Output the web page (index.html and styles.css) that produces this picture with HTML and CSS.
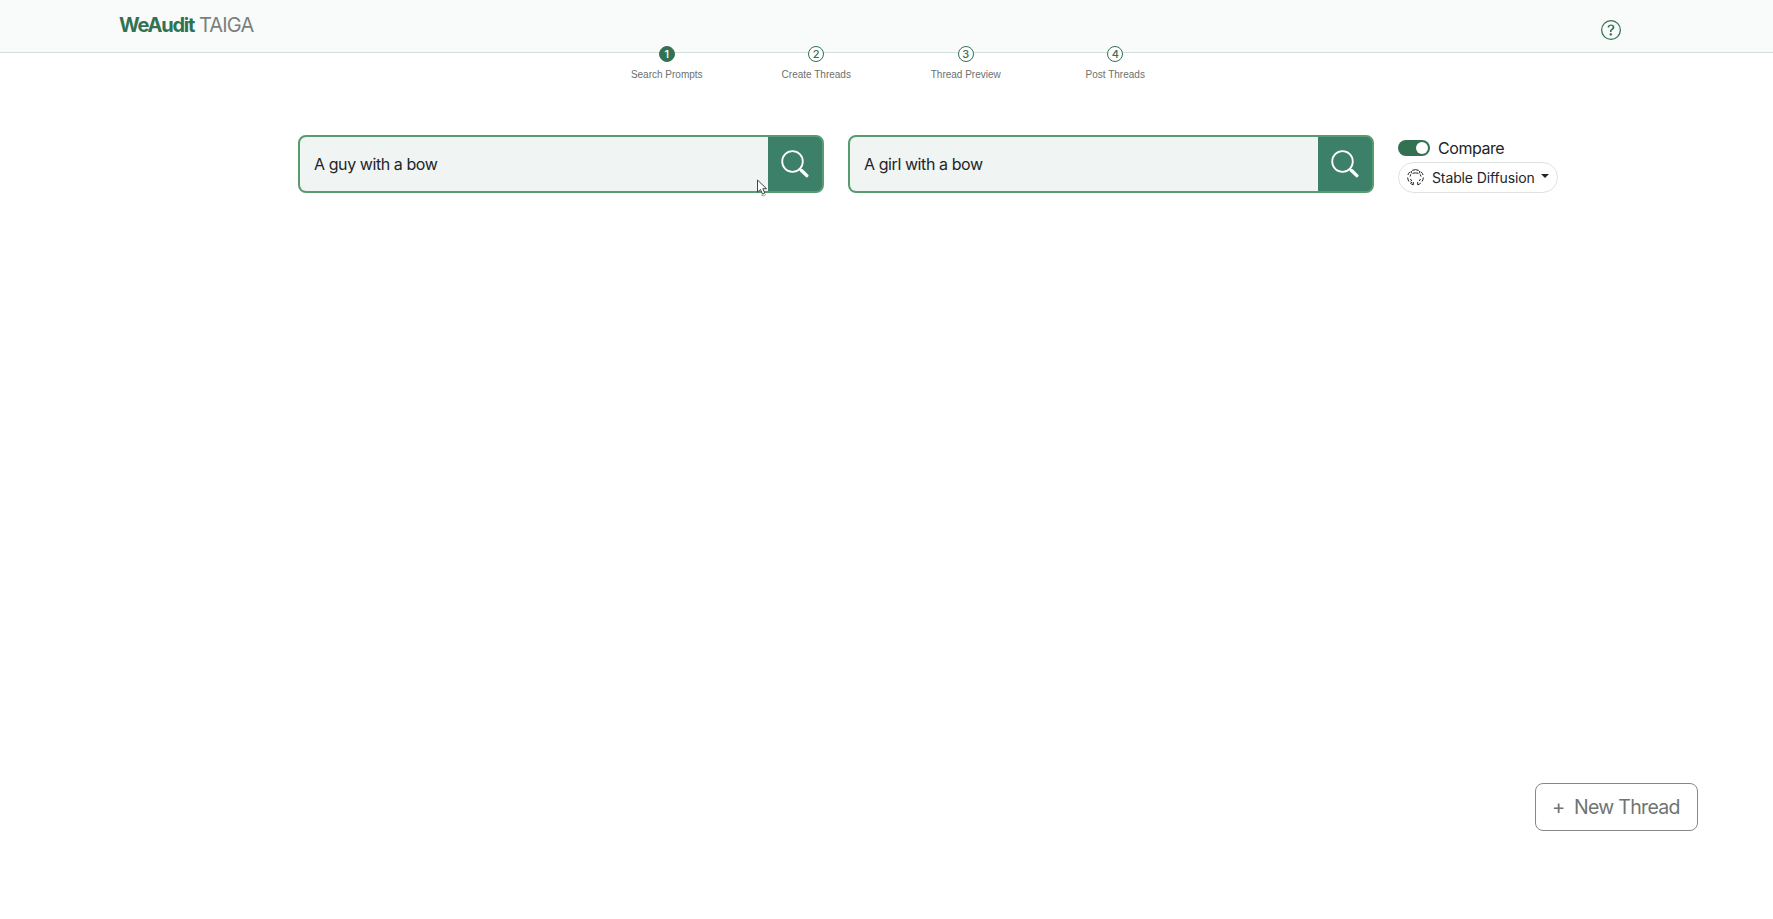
FILE: index.html
```html
<!DOCTYPE html>
<html lang="en">
<head>
<meta charset="utf-8">
<title>WeAudit TAIGA</title>
<link rel="stylesheet" href="styles.css">
</head>
<body>
<header class="header">
  <div class="brand"><strong>WeAudit</strong><span>TAIGA</span></div>
  <svg class="help" viewBox="0 0 16 16"><path d="M8 15A7 7 0 1 1 8 1a7 7 0 0 1 0 14m0 1A8 8 0 1 0 8 0a8 8 0 0 0 0 16"/><path d="M5.255 5.786a.237.237 0 0 0 .241.247h.825c.138 0 .248-.113.266-.25.09-.656.54-1.134 1.342-1.134.686 0 1.314.343 1.314 1.168 0 .635-.374.927-.965 1.371-.673.489-1.206 1.06-1.168 1.987l.003.217a.25.25 0 0 0 .25.246h.811a.25.25 0 0 0 .25-.25v-.105c0-.718.273-.927 1.01-1.486.609-.463 1.244-.977 1.244-2.056 0-1.511-1.276-2.241-2.673-2.241-1.267 0-2.655.59-2.75 2.286m1.557 5.763c0 .533.425.927 1.01.927.609 0 1.028-.394 1.028-.927 0-.552-.42-.94-1.029-.94-.584 0-1.009.388-1.009.94"/></svg>
</header>
<nav class="steps">
  <div class="step active"><b>1</b><span>Search Prompts</span></div>
  <div class="step"><b>2</b><span>Create Threads</span></div>
  <div class="step"><b>3</b><span>Thread Preview</span></div>
  <div class="step"><b>4</b><span>Post Threads</span></div>
</nav>
<main class="toolbar">
  <div class="search">
    <div class="field">A guy with a bow</div>
    <div class="go"><svg class="glass" viewBox="0 0 28 28"><circle cx="11.5" cy="11.5" r="10.3"/><path class="neck" d="M18.5 19l2 2"/><path class="grip" d="M20.5 20.5l5.3 5.1"/></svg></div>
    <svg class="cursor" viewBox="0 0 12 18"><path d="M1.5 1v12.2l3-2.7 2 4.6 2.3-1-2-4.4h3.7z"/><path class="trail" d="M5 16l3 1 2-2"/></svg>
  </div>
  <div class="search">
    <div class="field">A girl with a bow</div>
    <div class="go"><svg class="glass" viewBox="0 0 28 28"><circle cx="11.5" cy="11.5" r="10.3"/><path class="neck" d="M18.5 19l2 2"/><path class="grip" d="M20.5 20.5l5.3 5.1"/></svg></div>
  </div>
  <div class="options">
    <div class="compare"><i class="toggle"></i><span>Compare</span></div>
    <div class="model">
      <svg class="logo" viewBox="0 0 17 17"><path class="ring" d="M5.2 1.4a8 8 0 0 1 6.6 0M2.9 2.9A8 8 0 0 0 .9 6M14.1 2.9a8 8 0 0 1 2 3.1M.7 8.5a8 8 0 0 0 1.2 4M16.3 8.5a8 8 0 0 1-1.2 4M3.2 14a8 8 0 0 0 3 1.8M13.8 14a8 8 0 0 1-3 1.8"/><path d="M4.3 2v2.2M12.7 2v2.2M5.5 4.3q3-.9 6 0M3.8 5.3L3 7.5M13.2 5.3l.8 2.2M3.4 10l1.4 2M13.6 10l-1.4 2M6.3 13v2.8M10.7 13v2.8M3.6 12.6l1.6 1.5"/></svg>
      <span>Stable Diffusion</span><i class="caret"></i>
    </div>
  </div>
</main>
<button class="thread"><span class="plus">+</span><span class="label">New Thread</span></button>
</body>
</html>
```
FILE: styles.css
```css
* { box-sizing: border-box; }
body {
  margin: 0;
  height: 919px;
  display: flex;
  flex-direction: column;
  background: #fff;
  font-family: Inter, "Liberation Sans", sans-serif;
  color: #212529;
}
.header {
  height: 53px;
  flex: none;
  display: flex;
  justify-content: space-between;
  padding: 0 152.5px 0 119px;
  background: #f8fbfa;
  border-bottom: 1px solid #d3dfdb;
}
.brand {
  display: flex;
  gap: 5px;
  padding-top: 13px;
  font-size: 20px;
  line-height: 24px;
  color: #7b807e;
}
.brand strong { color: #327253; letter-spacing: -1.25px; }
.brand span { letter-spacing: -.85px; }
.help { width: 20px; height: 20px; margin-top: 20px; fill: #327253; }
.steps {
  display: flex;
  width: 598px;
  margin: -7px 0 0 592px;
  position: relative;
}
.step { flex: 1; display: flex; flex-direction: column; align-items: center; gap: 7px; }
.step b {
  width: 16px;
  height: 16px;
  border: 1px solid #327253;
  border-radius: 50%;
  background: #fff;
  color: #327253;
  font-size: 11px;
  font-weight: 500;
  line-height: 14px;
  text-align: center;
}
.step.active b { background: #327253; color: #fff; }
.step span {
  font: 10px/12px "Liberation Sans", sans-serif;
  color: #6c706e;
  white-space: nowrap;
}
.toolbar { display: flex; gap: 24px; margin: 54px 0 0 298px; }
.search {
  position: relative;
  display: flex;
  width: 526px;
  height: 58px;
  border: 2px solid #579b6e;
  border-radius: 8px;
  background: #579b6e;
}
.field {
  flex: 1;
  padding-left: 14px;
  border-radius: 6px 0 0 6px;
  background: #f0f4f3;
  font-size: 16px;
  line-height: 54px;
  letter-spacing: -.42px;
}
.go {
  width: 54px;
  display: flex;
  align-items: center;
  justify-content: center;
  border-radius: 0 6px 6px 0;
  background: #3c806a;
}
.glass { width: 28px; height: 28px; fill: none; stroke: #fff; stroke-width: 1.8; stroke-linecap: round; }
.grip { stroke-width: 3.4; }
.cursor {
  position: absolute;
  left: 456px;
  top: 42px;
  width: 12px;
  height: 18px;
  fill: #fff;
  stroke: #444;
  stroke-width: 1;
}
.trail { fill: none; stroke: #aaa; }
.options { width: 160px; display: flex; flex-direction: column; padding-top: 1px; }
.compare { display: flex; align-items: center; gap: 8px; height: 23px; font-size: 16px; letter-spacing: -.45px; }
.toggle { width: 32px; height: 16px; padding: 2px; border-radius: 8px; background: #327253; display: flex; justify-content: flex-end; }
.toggle::after { content: ""; width: 12px; height: 12px; border-radius: 50%; background: #fff; }
.model {
  display: flex;
  align-items: center;
  height: 31px;
  margin-top: 2.5px;
  padding-left: 8px;
  border: 1px solid #dee2e1;
  border-radius: 16px;
  font-size: 14px;
  letter-spacing: -.12px;
  white-space: nowrap;
}
.logo { width: 17px; height: 17px; margin-right: 8px; fill: none; stroke: #222; stroke-width: 1; }
.model span { width: 103px; }
.caret { margin: -2px 0 0 6px; border: 4px solid transparent; border-top-color: #212529; border-bottom: 0; }
.thread {
  display: flex;
  align-items: center;
  width: 163px;
  height: 48px;
  margin: auto 75px 88px auto;
  padding: 0 0 0 16px;
  border: 1px solid #858888;
  border-radius: 8px;
  background: #fff;
  color: #707473;
  font: 20px/24px Inter, "Liberation Sans", sans-serif;
  white-space: nowrap;
}
.plus { width: 22px; text-align: left; }
.label { font-size: 19.5px; letter-spacing: -.7px; }
```
